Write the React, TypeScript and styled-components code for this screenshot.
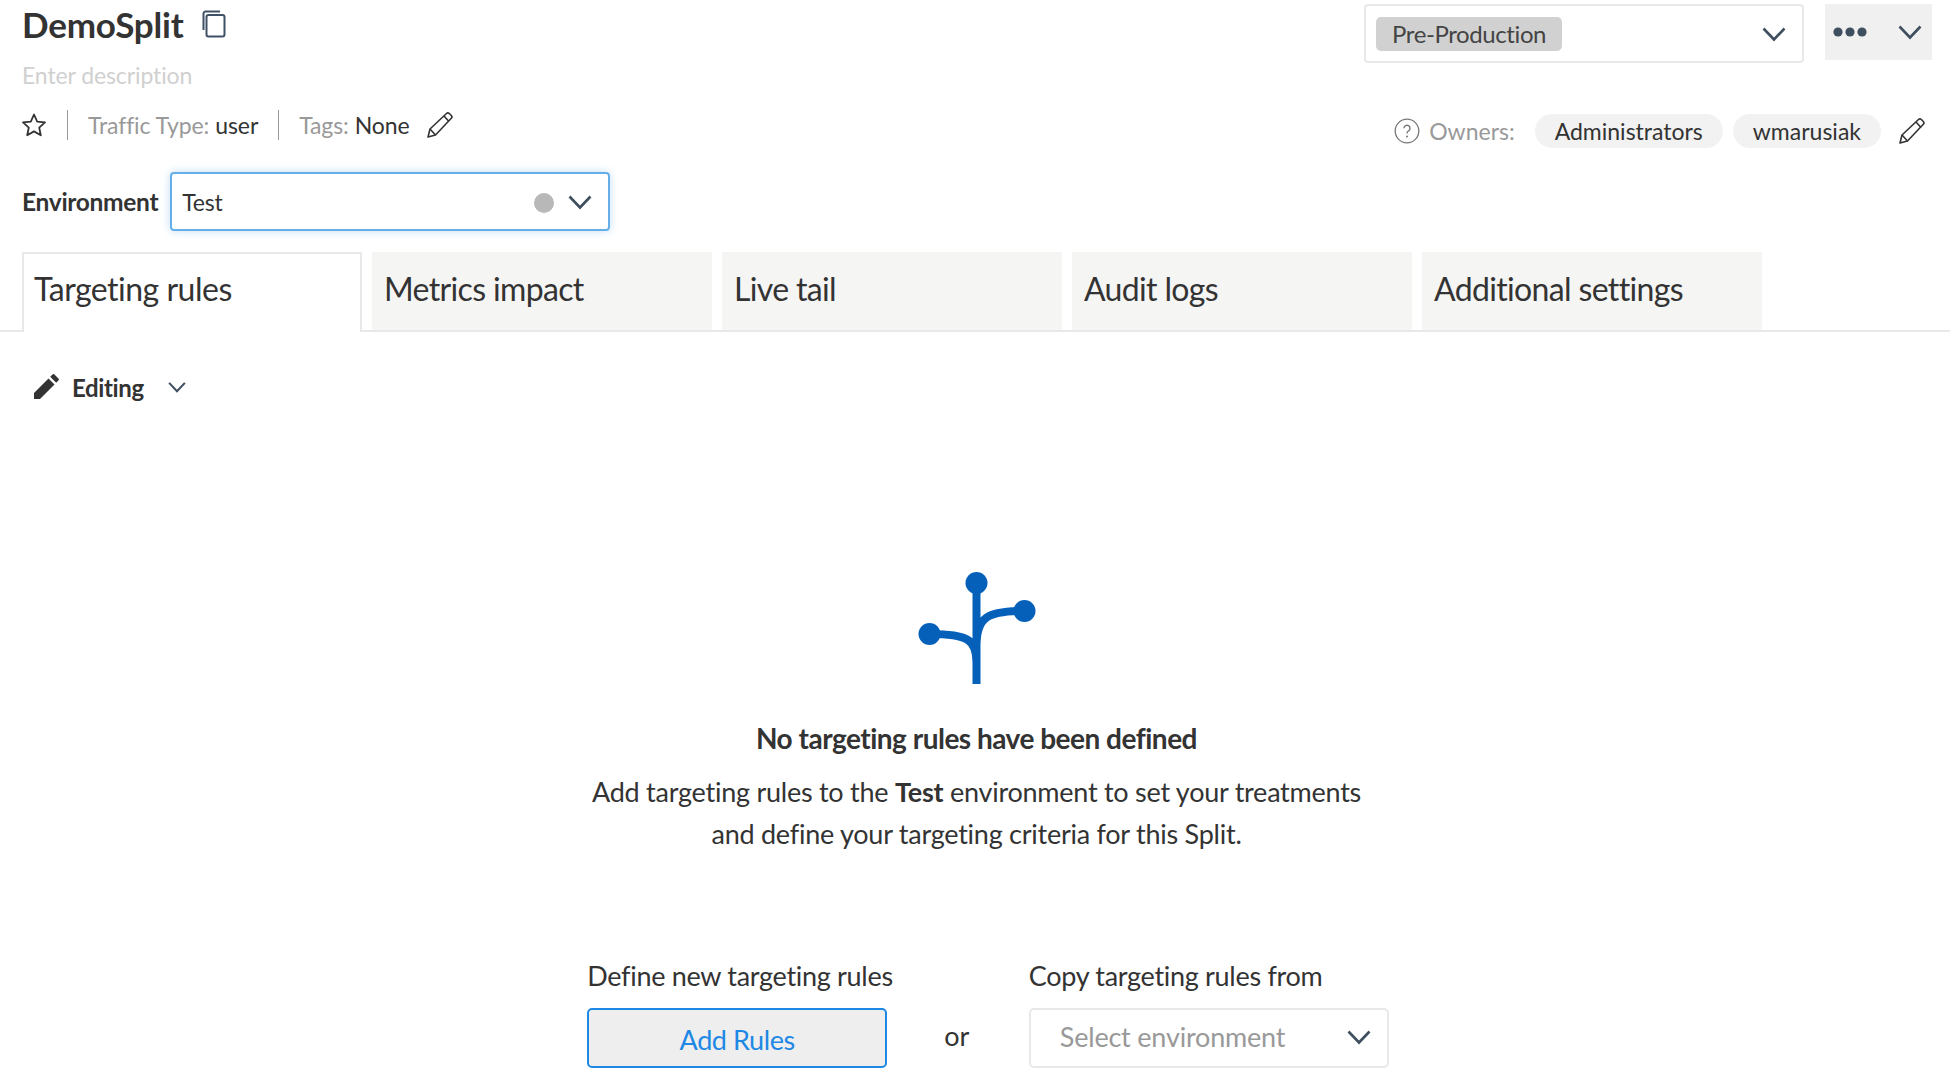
import React from 'react';
import styled, { createGlobalStyle } from 'styled-components';

const GlobalStyle = createGlobalStyle`
  html, body {
    margin: 0;
    padding: 0;
    background: #fff;
    font-family: "Lato", "Liberation Sans", sans-serif;
    color: #333;
  }
`;

const Page = styled.div`
  width: 1950px;
  height: 1080px;
  overflow: hidden;
  display: flex;
  flex-direction: column;
`;

const Header = styled.div`
  display: flex;
  justify-content: space-between;
  height: 172px;
  padding: 0 18px 0 22px;
`;

const HeaderLeft = styled.div`
  display: flex;
  flex-direction: column;
`;

const TitleRow = styled.div`
  display: flex;
  align-items: center;
  gap: 18px;
  height: 48px;
`;

const Title = styled.h1`
  margin: 0;
  font-size: 35px;
  font-weight: 700;
  letter-spacing: -0.2px;
  color: #333;
`;

const Description = styled.div`
  margin-top: 12px;
  height: 30px;
  line-height: 30px;
  font-size: 23px;
  letter-spacing: -0.1px;
  color: #d0d0d0;
`;

const MetaRow = styled.div`
  display: flex;
  align-items: center;
  margin: 20px 0 0 -1px;
  height: 30px;
  font-size: 23px;
  letter-spacing: -0.1px;
`;

const Divider = styled.span`
  width: 1px;
  height: 30px;
  background: #999;
  margin: 0 20px;
`;

const Muted = styled.span`
  color: #999;
  margin-right: 6px;
`;

const MetaSpacer = styled.span<{ $width: number }>`
  width: ${({ $width }) => $width}px;
`;

const HeaderRight = styled.div`
  display: flex;
  flex-direction: column;
  align-items: flex-end;
`;

const TopControls = styled.div`
  display: flex;
  gap: 21px;
  margin-top: 4px;
`;

const StatusSelect = styled.div`
  box-sizing: border-box;
  width: 440px;
  height: 59px;
  border: 2px solid #e8e8e8;
  border-radius: 4px;
  display: flex;
  align-items: center;
  justify-content: space-between;
  padding: 0 16px 0 10px;
`;

const StatusTag = styled.span`
  background: #d1d1d1;
  border-radius: 5px;
  height: 34px;
  line-height: 34px;
  padding: 0 16px;
  font-size: 24px;
  letter-spacing: -0.4px;
  color: #444;
`;

const MoreButton = styled.div`
  width: 107px;
  height: 56px;
  background: #f0f0f0;
  display: flex;
  align-items: center;
  justify-content: space-between;
  padding: 0 10px 0 7px;
  box-sizing: border-box;
`;

const OwnersRow = styled.div`
  display: flex;
  align-items: center;
  height: 34px;
  margin-top: 51px;
  margin-right: 6px;
  font-size: 23px;
`;

const OwnersLabel = styled.span`
  color: #999;
  margin: 0 20px 0 9px;
`;

const Pill = styled.span`
  background: #f2f2f2;
  border-radius: 17px;
  height: 34px;
  line-height: 34px;
  padding: 0 20px;
  margin-right: 10px;
  color: #333;
`;

const EnvRow = styled.div`
  display: flex;
  align-items: center;
  gap: 12px;
  height: 59px;
  padding-left: 22px;
`;

const EnvLabel = styled.label`
  font-size: 24.5px;
  font-weight: 700;
  letter-spacing: -0.3px;
`;

const EnvSelect = styled.div`
  box-sizing: border-box;
  width: 440px;
  height: 59px;
  border: 2px solid #66aee8;
  border-radius: 4px;
  box-shadow: 0 0 8px rgba(102, 174, 232, 0.4);
  display: flex;
  align-items: center;
  padding: 0 16px 0 10px;
  font-size: 23px;
  letter-spacing: -0.2px;
`;

const EnvValue = styled.span`
  flex: 1;
`;

const StatusDot = styled.span`
  width: 20px;
  height: 20px;
  border-radius: 50%;
  background: #b8b8b8;
  margin: 2px 14px 0 0;
`;

const TabBar = styled.div`
  display: flex;
  gap: 10px;
  height: 78px;
  margin-top: 21px;
  padding-left: 22px;
  border-bottom: 2px solid #e8e8e8;
`;

const Tab = styled.div<{ $active?: boolean }>`
  box-sizing: border-box;
  width: 340px;
  height: ${({ $active }) => ($active ? '80px' : '78px')};
  display: flex;
  align-items: center;
  padding: 0 10px ${({ $active }) => ($active ? '10px' : '5px')} ${({ $active }) => ($active ? '10px' : '12px')};
  font-size: 32px;
  letter-spacing: ${({ $active }) => ($active ? '-0.5px' : '-0.65px')};
  color: #333;
  background: ${({ $active }) => ($active ? '#fff' : '#f5f5f4')};
  border: ${({ $active }) => ($active ? '2px solid #e8e8e8' : 'none')};
  border-bottom: none;
`;

const ModeRow = styled.div`
  display: flex;
  align-items: center;
  height: 40px;
  margin-top: 35px;
  padding-left: 33px;
`;

const ModeLabel = styled.span`
  font-size: 24px;
  font-weight: 700;
  letter-spacing: -0.35px;
  margin: 0 24px 0 13px;
`;

const EmptyState = styled.div`
  display: flex;
  flex-direction: column;
  align-items: center;
  margin-top: 165px;
  padding-left: 3px;
`;

const EmptyTitle = styled.h2`
  margin: 36px 0 0;
  font-size: 28px;
  line-height: 36px;
  font-weight: 700;
  letter-spacing: -0.5px;
`;

const EmptyText = styled.p`
  margin: 15px 0 0;
  font-size: 27px;
  line-height: 42px;
  letter-spacing: -0.25px;
  text-align: center;
`;

const Actions = styled.div`
  display: flex;
  align-items: flex-end;
  margin: 104px 0 0 23px;
`;

const ActionColumn = styled.div`
  display: flex;
  flex-direction: column;
  gap: 15px;
`;

const ActionLabel = styled.span`
  font-size: 27px;
  line-height: 34px;
  letter-spacing: -0.3px;
`;

const AddButton = styled.button`
  box-sizing: border-box;
  width: 300px;
  height: 60px;
  background: #eee;
  border: 2px solid #1e88e5;
  border-radius: 5px;
  color: #1e88e5;
  font-family: inherit;
  font-size: 27px;
  letter-spacing: -0.4px;
  padding-top: 4px;
`;

const OrText = styled.span`
  box-sizing: border-box;
  width: 136px;
  padding-right: 8px;
  text-align: center;
  font-size: 27px;
  line-height: 60px;
  margin-bottom: 2px;
`;

const CopySelect = styled.div`
  box-sizing: border-box;
  width: 360px;
  height: 60px;
  border: 2px solid #e8e8e8;
  border-radius: 5px;
  display: flex;
  align-items: center;
  justify-content: space-between;
  padding: 0 16px 3px 29px;
  font-size: 27px;
  letter-spacing: -0.2px;
  color: #999;
`;

const Chevron = ({ size = 24, width = 2.6 }: { size?: number; width?: number }) => (
  <svg width={size} height={size} viewBox="0 0 24 24" fill="none">
    <path d="M1.5 6.5 12 17.5 22.5 6.5" stroke="#3f4f5f" strokeWidth={width} />
  </svg>
);

const PencilOutline = () => (
  <svg width="28" height="28" viewBox="0 0 28 28" fill="none" stroke="#333" strokeWidth="1.6" strokeLinejoin="round">
    <path d="M2 26 4 18 20.5 2.5a2 2 0 0 1 2.8 0l2 2a2 2 0 0 1 0 2.8L9.5 24Z" />
    <path d="M4 18 9.5 24M18 5l5 5.5" />
  </svg>
);

const CopyIcon = () => (
  <svg width="24" height="28" viewBox="0 0 24 28" fill="none" stroke="#3f5166" strokeWidth="2">
    <path d="M1.5 20V3.5a2 2 0 0 1 2-2H18" />
    <rect x="4.5" y="5" width="18" height="21.5" rx="2" />
  </svg>
);

const StarIcon = () => (
  <svg width="26" height="26" viewBox="0 0 26 26" fill="none" stroke="#333" strokeWidth="1.8" strokeLinejoin="round">
    <path d="M13 2.5 16.2 9.6 24 10.4 18.2 15.6 19.8 23.3 13 19.4 6.2 23.3 7.8 15.6 2 10.4 9.8 9.6Z" />
  </svg>
);

const HelpIcon = () => (
  <svg width="26" height="26" viewBox="0 0 26 26" fill="none">
    <circle cx="13" cy="13" r="11.8" stroke="#777" strokeWidth="1.3" />
    <path d="M10 10.2a3 3 0 1 1 4.6 2.6c-1 .7-1.6 1.2-1.6 2.6" stroke="#777" strokeWidth="1.4" />
    <circle cx="13" cy="18.4" r="1" fill="#777" />
  </svg>
);

const DotsIcon = () => (
  <svg width="36" height="12" viewBox="0 0 36 12" fill="#3f4f5f">
    <circle cx="6" cy="6" r="4.6" />
    <circle cx="18" cy="6" r="4.6" />
    <circle cx="30" cy="6" r="4.6" />
  </svg>
);

const PencilSolid = () => (
  <svg width="26" height="26" viewBox="0 0 26 26" fill="#333">
    <path d="M1 25v-6L15.5 4.5l6 6L7 25Z" />
    <path d="M17.2 2.8 19.5.6a1.4 1.4 0 0 1 2 0l3.9 3.9a1.4 1.4 0 0 1 0 2L23.2 8.8Z" />
  </svg>
);

const SplitIcon = () => (
  <svg width="118" height="112" viewBox="0 0 118 112" fill="none">
    <circle cx="58.5" cy="11" r="11" fill="#0560ba" />
    <circle cx="106.5" cy="39" r="11" fill="#0560ba" />
    <circle cx="11.5" cy="62" r="11" fill="#0560ba" />
    <path d="M58.5 12V112M58.5 74C58.5 46 68 39 106 39M58.5 90C58.5 68 50 62 12 62" stroke="#0560ba" strokeWidth="8" />
  </svg>
);

const tabs = ['Targeting rules', 'Metrics impact', 'Live tail', 'Audit logs', 'Additional settings'];

const App = () => {
  return (
    <Page>
      <GlobalStyle />
      <Header>
        <HeaderLeft>
          <TitleRow>
            <Title>DemoSplit</Title>
            <CopyIcon />
          </TitleRow>
          <Description>Enter description</Description>
          <MetaRow>
            <StarIcon />
            <Divider />
            <Muted>Traffic Type:</Muted> user
            <Divider />
            <Muted>Tags:</Muted> None
            <MetaSpacer $width={16} />
            <PencilOutline />
          </MetaRow>
        </HeaderLeft>
        <HeaderRight>
          <TopControls>
            <StatusSelect>
              <StatusTag>Pre-Production</StatusTag>
              <Chevron />
            </StatusSelect>
            <MoreButton>
              <DotsIcon />
              <Chevron />
            </MoreButton>
          </TopControls>
          <OwnersRow>
            <HelpIcon />
            <OwnersLabel>Owners:</OwnersLabel>
            <Pill>Administrators</Pill>
            <Pill>wmarusiak</Pill>
            <MetaSpacer $width={7} />
            <PencilOutline />
          </OwnersRow>
        </HeaderRight>
      </Header>
      <EnvRow>
        <EnvLabel>Environment</EnvLabel>
        <EnvSelect>
          <EnvValue>Test</EnvValue>
          <StatusDot />
          <Chevron />
        </EnvSelect>
      </EnvRow>
      <TabBar>
        {tabs.map((tab, idx) => (
          <Tab key={tab} $active={idx === 0}>
            {tab}
          </Tab>
        ))}
      </TabBar>
      <ModeRow>
        <PencilSolid />
        <ModeLabel>Editing</ModeLabel>
        <Chevron size={18} width={2.8} />
      </ModeRow>
      <EmptyState>
        <SplitIcon />
        <EmptyTitle>No targeting rules have been defined</EmptyTitle>
        <EmptyText>
          Add targeting rules to the <b>Test</b> environment to set your treatments
          <br />
          and define your targeting criteria for this Split.
        </EmptyText>
        <Actions>
          <ActionColumn>
            <ActionLabel>Define new targeting rules</ActionLabel>
            <AddButton>Add Rules</AddButton>
          </ActionColumn>
          <OrText>or</OrText>
          <ActionColumn>
            <ActionLabel>Copy targeting rules from</ActionLabel>
            <CopySelect>
              Select environment
              <Chevron />
            </CopySelect>
          </ActionColumn>
        </Actions>
      </EmptyState>
    </Page>
  );
};

export default App;
